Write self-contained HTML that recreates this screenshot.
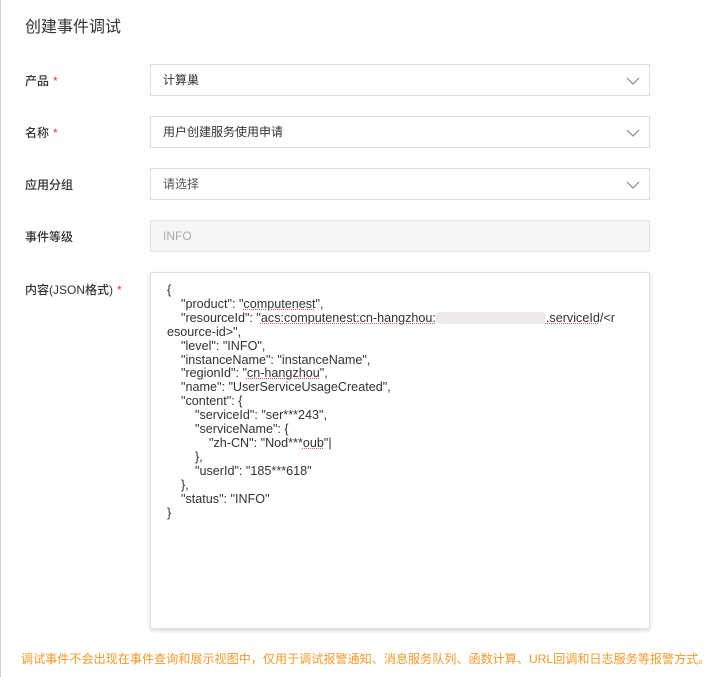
<!DOCTYPE html>
<html><head><meta charset="utf-8"><style>
body{margin:0;width:724px;height:677px;background:#fff;font-family:"Liberation Sans","Noto Sans CJK SC",sans-serif;position:relative;overflow:hidden;border-left:1px solid #d0d0d0;box-sizing:border-box}
.t{position:absolute;left:24px;top:13px;font-size:16px;color:#333}
.l{position:absolute;left:24px;font-size:12px;color:#333;font-weight:500}
.l b{color:#e4393c;font-weight:normal;margin-left:4px}
.i{position:absolute;left:149px;width:500px;height:32px;box-sizing:border-box;border:1px solid #dcdcdc;font-size:12px;color:#333;line-height:30px;padding-left:12px;background:#fff}
.i svg{position:absolute;right:9px;top:9px}
.ta{position:absolute;left:149px;top:272px;width:500px;height:357px;box-sizing:border-box;border:1px solid #e0e0e0;box-shadow:0 2px 4px rgba(0,0,0,.15);background:#fff}
pre{margin:0;position:absolute;left:16px;top:11px;font-family:"Liberation Sans",sans-serif;font-size:12.6px;line-height:13.9px;color:#333}
.u{text-decoration:underline dotted #e55;text-decoration-thickness:1px}
.f{position:absolute;left:20px;top:650px;font-size:12.1px;color:#f39a2b}
</style></head><body>
<div class="t">创建事件调试</div>
<div class="l" style="top:72px">产品<b>*</b></div>
<div class="i" style="top:64px">计算巢<svg width="14" height="14"><path d="M1 4l6 6 6-6" fill="none" stroke="#888" stroke-width="1.2"/></svg></div>
<div class="l" style="top:124px">名称<b>*</b></div>
<div class="i" style="top:116px">用户创建服务使用申请<svg width="14" height="14"><path d="M1 4l6 6 6-6" fill="none" stroke="#888" stroke-width="1.2"/></svg></div>
<div class="l" style="top:176px">应用分组</div>
<div class="i" style="top:168px;color:#555">请选择<svg width="14" height="14"><path d="M1 4l6 6 6-6" fill="none" stroke="#888" stroke-width="1.2"/></svg></div>
<div class="l" style="top:228px">事件等级</div>
<div class="i" style="top:220px;background:#f5f6f7;color:#aaa;border-color:#e3e3e3">INFO</div>
<div class="l" style="top:281px">内容(JSON格式)<b>*</b></div>
<div class="ta"><pre>{
    "product": "<span class="u">computenest</span>",
    "resourceId": "<span class="u">acs:computenest:cn-hangzhou:</span><span style="display:inline-block;width:110px;height:12px;background:#eeeaea;vertical-align:-2px;border-radius:4px"></span><span class="u">.serviceId</span>/&lt;r
esource-id&gt;",
    "level": "INFO",
    "instanceName": "instanceName",
    "regionId": "<span class="u">cn-hangzhou</span>",
    "name": "UserServiceUsageCreated",
    "content": {
        "serviceId": "ser***243",
        "serviceName": {
            "zh-CN": "Nod***<span class="u">oub</span>"|
        },
        "userId": "185***618"
    },
    "status": "INFO"
}</pre></div>
<div class="f">调试事件不会出现在事件查询和展示视图中，仅用于调试报警通知、消息服务队列、函数计算、URL回调和日志服务等报警方式。</div>
</body></html>
